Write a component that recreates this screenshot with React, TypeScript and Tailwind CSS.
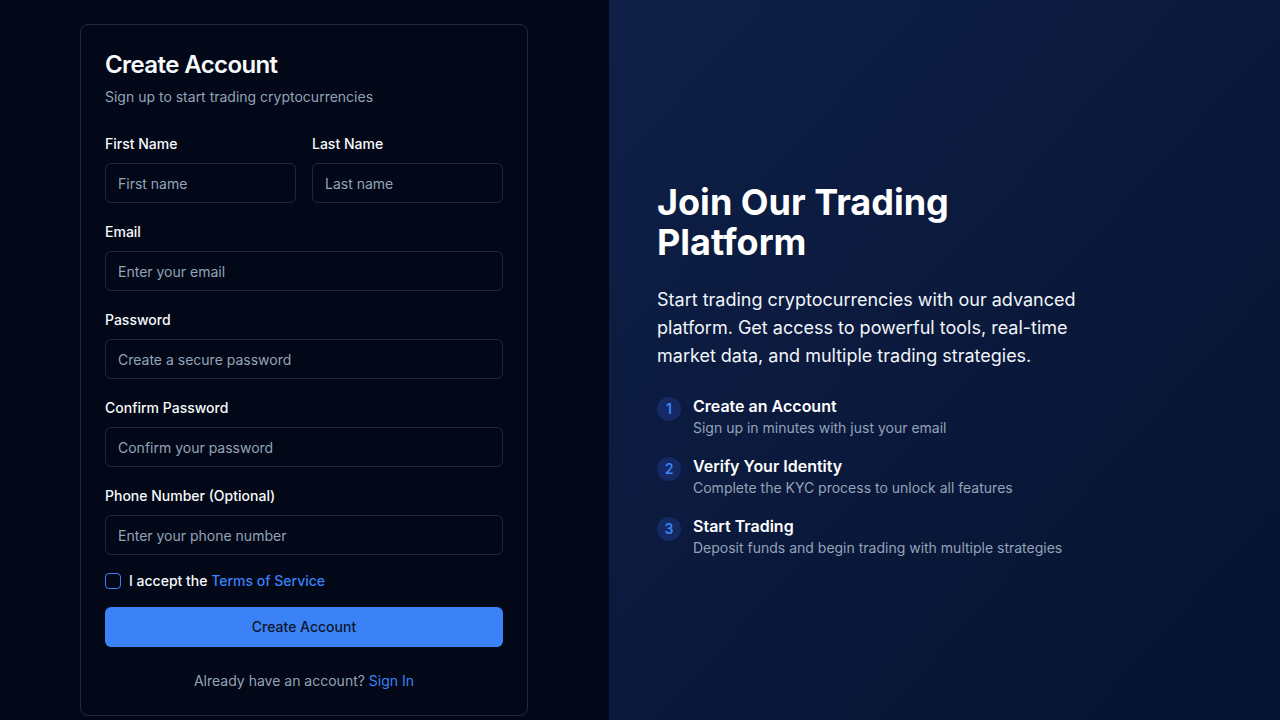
const steps = [
  { n: 1, title: "Create an Account", desc: "Sign up in minutes with just your email" },
  { n: 2, title: "Verify Your Identity", desc: "Complete the KYC process to unlock all features" },
  { n: 3, title: "Start Trading", desc: "Deposit funds and begin trading with multiple strategies" },
];

const Field = ({ label, placeholder, type = "text" }: { label: string; placeholder: string; type?: string }) => (
  <div>
    <label className="block text-sm leading-5 font-medium text-[#f8fafc] mb-[9px]">{label}</label>
    <input
      type={type}
      placeholder={placeholder}
      className="block w-full h-10 rounded-md border border-[#1e293b] bg-transparent px-3 text-sm text-[#f8fafc] placeholder:text-[#94a3b8] outline-none"
    />
  </div>
);

export default function App() {
  return (
    <div className="min-h-screen flex bg-[#020817] font-['Inter',sans-serif]">
      {/* Form side */}
      <div className="w-[609px] shrink-0 pl-20 py-6">
        <div className="w-[448px] rounded-lg border border-[#1e293b] bg-[#020817] p-6">
          <h1 className="text-2xl leading-8 font-semibold tracking-tight text-[#f8fafc]">Create Account</h1>
          <p className="mt-1.5 text-sm leading-5 text-[#94a3b8]">Sign up to start trading cryptocurrencies</p>

          <div className="mt-[27px] flex flex-col gap-[19px]">
            <div className="grid grid-cols-2 gap-4">
              <Field label="First Name" placeholder="First name" />
              <Field label="Last Name" placeholder="Last name" />
            </div>
            <Field label="Email" placeholder="Enter your email" type="email" />
            <Field label="Password" placeholder="Create a secure password" type="password" />
            <Field label="Confirm Password" placeholder="Confirm your password" type="password" />
            <Field label="Phone Number (Optional)" placeholder="Enter your phone number" />
          </div>

          <div className="mt-4 flex items-center gap-2 h-5">
            <span className="w-4 h-4 rounded-[4px] border border-[#3b82f6] shrink-0" />
            <span className="text-sm leading-5 font-medium text-[#f8fafc]">
              I accept the <span className="text-[#3b82f6]">Terms of Service</span>
            </span>
          </div>

          <button className="mt-4 w-full h-10 rounded-md bg-[#3b82f6] text-sm font-medium text-[#0f172a]">
            Create Account
          </button>

          <p className="mt-6 text-center text-sm leading-5 text-[#94a3b8]">
            Already have an account? <span className="text-[#3b82f6]">Sign In</span>
          </p>
        </div>
      </div>

      {/* Info side */}
      <div className="flex-1 flex items-center px-12 bg-gradient-to-br from-[#0f1f47] to-[#061330]">
        <div className="max-w-[448px]">
          <h2 className="text-4xl leading-10 font-bold text-white">Join Our Trading Platform</h2>
          <p className="mt-6 text-lg leading-7 text-[#f1f5f9]">
            Start trading cryptocurrencies with our advanced platform. Get access to powerful tools, real-time market data, and multiple trading strategies.
          </p>
          <div className="mt-6 flex flex-col gap-4">
            {steps.map((s) => (
              <div key={s.n} className="flex gap-3">
                <div className="mt-[3px] w-6 h-6 shrink-0 rounded-full bg-[#1e3a8a]/50 flex items-center justify-center text-sm font-semibold text-[#3b82f6]">
                  {s.n}
                </div>
                <div>
                  <h3 className="text-base leading-6 font-semibold text-white">{s.title}</h3>
                  <p className="text-sm leading-5 text-[#94a3b8]">{s.desc}</p>
                </div>
              </div>
            ))}
          </div>
        </div>
      </div>
    </div>
  );
}
